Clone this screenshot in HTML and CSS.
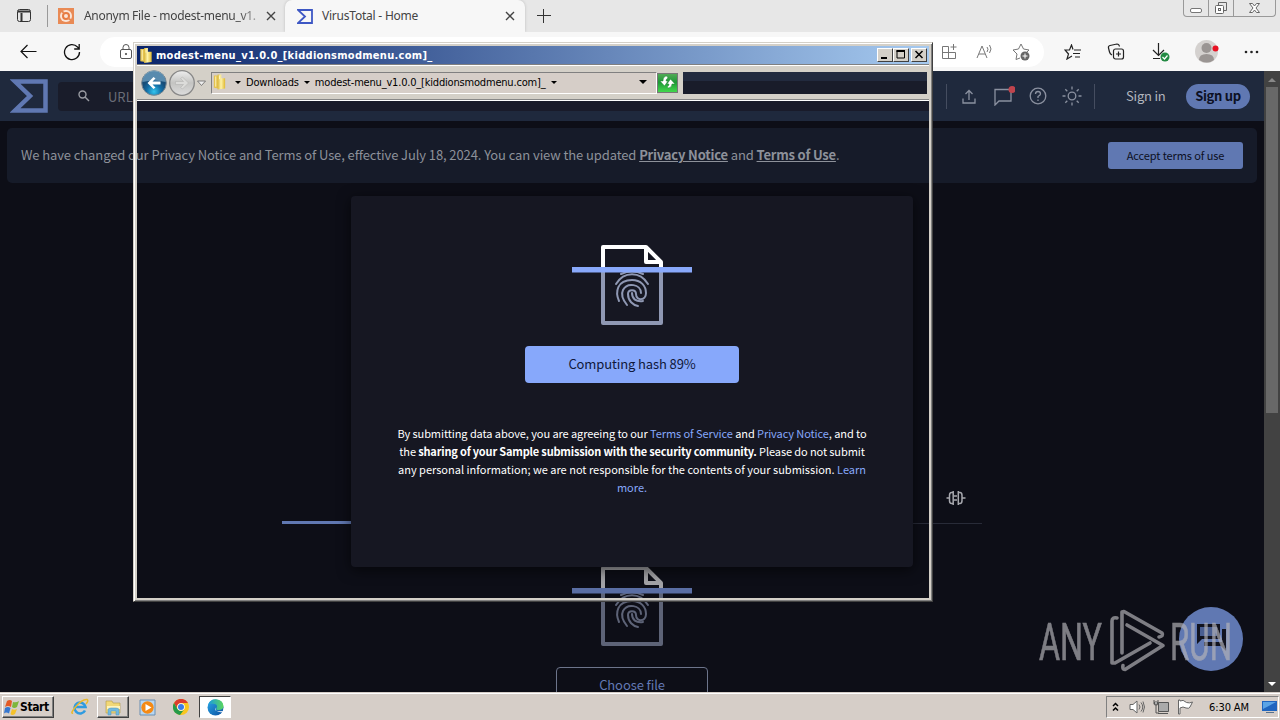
FILE: index.html
```
<!DOCTYPE html>
<html lang="en">
<head>
  <meta charset="UTF-8">
  <title>VirusTotal - Home</title>
  <link rel="stylesheet" href="styles.css">
</head>
<body>
  <!-- shared shapes -->
  <svg width="0" height="0" class="defs">
    <defs>
      <linearGradient id="gold" x2="1"><stop stop-color="#d9b63c"/><stop offset=".45" stop-color="#fff3a8"/><stop offset="1" stop-color="#e0b932"/></linearGradient>
      <radialGradient id="blueBtn" cy=".85"><stop stop-color="#35c5ee"/><stop offset=".6" stop-color="#126da5"/><stop offset="1" stop-color="#174d78"/></radialGradient>
      <linearGradient id="greyBtn" y2="1" x2="0"><stop stop-color="#eee"/><stop offset=".5" stop-color="#c4c4c2"/><stop offset="1" stop-color="#ddd"/></linearGradient>
      <linearGradient id="edgeA" x2="1" y2="1"><stop stop-color="#2aa7e8"/><stop offset="1" stop-color="#0b4fa0"/></linearGradient>
      <linearGradient id="edgeB" x2="1"><stop stop-color="#199be2"/><stop offset="1" stop-color="#5bd65c"/></linearGradient>
      <symbol id="folder" viewBox="0 0 16 18">
        <path d="M2 2h5v14l-5-1z" fill="#e5c34e"/><path d="M6 1h4v4h4v11l-8 1z" fill="url(#gold)"/><path d="M4 3v11M8 2v4" stroke="#fff6c0"/>
      </symbol>
      <symbol id="scanfile" viewBox="0 0 120 80">
        <g fill="none" stroke-width="4">
          <path d="M31 25V2h43l15 15v8M74 2v15h15" stroke="#fff" stroke-linejoin="round"/>
          <path d="M31 25v53h58V25" stroke="#8f98b3" stroke-linejoin="round"/>
        </g>
        <g fill="none" stroke="#8f98b3" stroke-width="2" stroke-linecap="round" transform="translate(0 -1)">
          <path d="M49 30q11-5 22 0"/>
          <path d="M44 40c8-13 24-13 32 0"/>
          <path d="M47 57c-4-9-2-21 13-21 9 0 14 6 14 13 0 8-10 8-10 1 0-5-8-5-8 0 0 7 5 11 10 12"/>
          <path d="M55 61c-4-5-6-11-4-15 4-8 18-6 18 3"/>
          <path d="M60 49c0 6 4 9 11 8"/>
        </g>
        <path d="M0 22h120v5.500H0z" fill="#89a9fb"/>
      </symbol>
    </defs>
  </svg>

  <div class="browser">
    <div class="tabstrip">
      <svg class="tab-actions" width="16" height="16" viewBox="0 0 16 16" fill="none" stroke="#333"><rect x="1.500" y="1.500" width="13" height="12" rx="2"/><path d="M2 3.500h12M5.500 5v8" stroke-width="2"/></svg>
      <div class="tab">
        <svg width="16" height="16" viewBox="0 0 16 16"><path fill="#e98a55" d="M0 0h16v16H0z"/><circle cx="8" cy="8" r="6" fill="#fbe5d8"/><circle cx="8" cy="8" r="3" fill="none" stroke="#e77b42" stroke-width="2"/><path d="M2 2l4 3M14 13l-4-3" stroke="#e98a55" stroke-width="2"/></svg>
        <span class="tab-title fade">Anonym File - modest-menu_v1.</span>
        <svg class="close" width="10" height="10" viewBox="0 0 10 10"><path d="M1 1l8 8M9 1L1 9" stroke="#444" stroke-width="1.400"/></svg>
      </div>
      <div class="tab active">
        <svg width="16" height="15" viewBox="0 0 16 15"><path d="M1 1h14v13H1l7-6.500z" fill="none" stroke="#3d57c4" stroke-width="1.800"/></svg>
        <span class="tab-title">VirusTotal - Home</span>
        <svg class="close" width="10" height="10" viewBox="0 0 10 10"><path d="M1 1l8 8M9 1L1 9" stroke="#444" stroke-width="1.400"/></svg>
      </div>
      <svg class="new-tab" width="14" height="14" viewBox="0 0 14 14"><path d="M0 6.500h14M6.500 0v14" stroke="#333"/></svg>
      <div class="caption-buttons">
        <span><svg width="24" height="16" fill="none" stroke="#777"><rect x="6.500" y="8.500" width="11" height="4" rx="1.500" fill="#fff"/></svg></span>
        <span><svg width="24" height="16" fill="none" stroke="#666"><path d="M9.500 5V2.500h8v8H15" /><rect x="6.500" y="5.500" width="8" height="8" rx="1" fill="#fff"/><rect x="9.500" y="8.500" width="2" height="2"/></svg></span>
        <span><svg width="41" height="16" fill="none" stroke="#666"><path d="M15.500 3.500h3l2 2.500 2-2.500h3l-3.500 4.500 3.500 4.500h-3l-2-2.500-2 2.500h-3l3.500-4.500z" fill="#fff"/></svg></span>
      </div>
    </div>

    <div class="toolbar">
      <svg class="back" width="17" height="15" viewBox="0 0 17 15" fill="none" stroke="#111" stroke-width="1.200"><path d="M16.500 7.500H1M7.500 1L1 7.500 7.500 14"/></svg>
      <svg class="reload" width="18" height="18" viewBox="0 0 18 18" fill="none" stroke="#111" stroke-width="1.300"><path d="M16.500 9A7.500 7.500 0 1 1 14.500 4L16 5.500M16.200 1v5h-5"/></svg>
      <div class="urlbar">
        <svg class="lock" width="13" height="16" viewBox="0 0 13 16" fill="none" stroke="#555"><rect x=".5" y="5.500" width="11" height="9" rx="1.500"/><path d="M3 5V3.500a3 3 0 0 1 6 0V5"/><circle cx="6" cy="10" r=".7" fill="#555"/></svg>
        <svg width="16" height="16" viewBox="0 0 16 16" fill="none" stroke="#777"><path d="M7.500 2.500h-6v12h13v-6h-13M7.500 2.500v12M12.500 0v6M9.500 3h6"/></svg>
        <svg width="17" height="16" viewBox="0 0 17 16" fill="none" stroke="#777"><path d="M1 14L6 2l5 12M3 10h6M11 3q2 2 0 5M13.500 1q3 4 0 8"/></svg>
        <svg width="18" height="18" viewBox="0 0 18 18" fill="none" stroke="#777"><path d="M8 15l-4 1.500 1-5.500L1 7l5.500-1L9 1l2.500 5L17 7l-2 2"/><circle cx="13" cy="13" r="4.500" fill="#666" stroke="none"/><path d="M13 10.500v5M10.500 13h5" stroke="#fff"/></svg>
      </div>
      <div class="tools">
        <svg width="18" height="16" viewBox="0 0 18 16" fill="none" stroke="#222" stroke-width="1.200"><path d="M9 5.500L7.500 1 5.500 6H1l3.500 4-1.500 5 5-3M10 6h7M9 9.500h7M11 13h5"/></svg>
        <svg width="18" height="17" viewBox="0 0 18 17" fill="none" stroke="#222" stroke-width="1.200"><rect x="6.500" y="6" width="10" height="10" rx="2"/><path d="M11.500 8.500v5M9 11h5M5 12q-2-1-2.500-3L1.500 5Q1 3 3 2.500l7-1.500q2 0 2.500 2.500"/></svg>
        <svg width="19" height="20" viewBox="0 0 19 20" fill="none" stroke="#222" stroke-width="1.200"><path d="M7.500 1v12M2 8l5.500 5.500L13 8M2 16.500h7"/><circle cx="14" cy="15" r="4.500" fill="#238a43" stroke="none"/><path d="M11.500 15l2 2 3-3.500" stroke="#fff"/></svg>
        <svg width="24" height="24" viewBox="0 0 24 24"><circle cx="11.500" cy="11.500" r="11.500" fill="#d4d1cf"/><circle cx="11.500" cy="8" r="5" fill="#9a9593"/><path d="M4 20q0-6 7.500-6T19 20q-7 5-15 0" fill="#9a9593"/><circle cx="20.500" cy="8.500" r="3" fill="#e81123"/></svg>
        <svg width="15" height="4" viewBox="0 0 15 4" fill="#222"><circle cx="2" cy="2" r="1.300"/><circle cx="7.500" cy="2" r="1.300"/><circle cx="13" cy="2" r="1.300"/></svg>
      </div>
    </div>

    <div class="viewport">
      <div class="page">
        <header class="vt-header">
          <svg class="vt-logo" width="38" height="34" viewBox="0 0 38 34"><path d="M5 2.500h30.500v29H5L20 17z" fill="none" stroke="#6078b2" stroke-width="4.500"/></svg>
          <div class="search">
            <svg width="12" height="12" viewBox="0 0 12 12" fill="none" stroke="#9a9ca3" stroke-width="1.400"><circle cx="4.500" cy="4.500" r="3.500"/><path d="M7 7l4 4"/></svg>
            <span>URL, IP address,</span>
          </div>
          <div class="header-icons">
            <i class="divider"></i>
            <svg width="14" height="15" viewBox="0 0 14 15"><path d="M7 11V2M3.500 5L7 1.500 10.500 5M1 9.500V14h12V9.500"/></svg>
            <svg class="nudge" width="21" height="20" viewBox="0 0 21 20"><path d="M1 19V3.500h16V15H5z"/><circle cx="18" cy="3.500" r="3.500" fill="#c0444d" stroke="none"/></svg>
            <svg width="18" height="18" viewBox="0 0 18 18"><circle cx="9" cy="9" r="7.800"/><path d="M6.500 7q0-2.500 2.500-2.500T11.500 7Q11.500 8 9 9.500v1.500M9 12.500V14"/></svg>
            <svg width="20" height="20" viewBox="0 0 20 20"><circle cx="10" cy="10" r="3.800"/><path d="M10 .5v3M10 16.500v3M.5 10h3M16.500 10h3M3.300 3.300l2 2M14.700 14.700l2 2M3.300 16.700l2-2M14.700 5.300l2-2"/></svg>
            <i class="divider last-divider"></i>
          </div>
          <span class="signin">Sign in</span>
          <span class="signup">Sign up</span>
        </header>

        <div class="notice">
          <p>We have changed our Privacy Notice and Terms of Use, effective July 18, 2024. You can view the updated <b>Privacy Notice</b> and <b>Terms of Use</b>.</p>
          <button><span>Accept terms of use</span></button>
        </div>

        <main class="home">
          <div class="home-tabs">
            <i class="marker"></i>
            <svg width="20" height="16" viewBox="0 0 20 16" fill="none" stroke="#a8a9af" stroke-width="1.500"><path d="M7.200 1v14M12.300 1v14M7 2.500H5.500q-2 0-2 3v5q0 3 2 3H7M12.500 2.500H14q2 0 2 3v5q0 3-2 3h-1.500M.5 8h3M16 8h3.500M8 6h3M8 10h3"/></svg>
          </div>
          <svg class="dim-icon" width="120" height="80"><use href="#scanfile"/></svg>
          <div class="choose"><span>Choose file</span></div>
        </main>

        <div class="modal">
          <svg width="120" height="80"><use href="#scanfile"/></svg>
          <div class="progress"><span>Computing hash 89%</span></div>
          <div class="terms">
            <span class="l1">By submitting data above, you are agreeing to our <a>Terms of Service</a> and <a>Privacy Notice</a>, and to</span>
            <span class="l2">the <b>sharing of your Sample submission with the security community.</b> Please do not submit</span>
            <span class="l3">any personal information; we are not responsible for the contents of your submission. <a>Learn</a></span>
            <span class="l4"><a>more.</a></span>
          </div>
        </div>

        <div class="chat">
          <svg width="32" height="28" viewBox="0 0 32 28"><path d="M1 0h23v15H6l-5 5zM26 5h4v22l-5-5H8v-4h18z" fill="#11131f"/><path d="M4 3h17v9H4z" fill="#4a5f92"/></svg>
        </div>
      </div>
      <div class="scrollbar">
        <svg width="16" height="15"><path d="M4 11l4-4 4 4z" fill="#888"/></svg>
        <i class="thumb"></i>
        <svg class="down" width="16" height="15"><path d="M4 5h8l-4 4z" fill="#fff"/></svg>
      </div>
    </div>
  </div>

  <!-- explorer window -->
  <div class="explorer">
    <div class="titlebar">
      <svg width="16" height="17"><use href="#folder"/></svg>
      <span class="title">modest-menu_v1.0.0_[kiddionsmodmenu.com]_</span>
      <span class="wbtn"><svg width="14" height="12"><path d="M3 8h6v2H3z"/></svg></span>
      <span class="wbtn"><svg width="14" height="12"><path d="M3 1.500h7.500v7.500H3z" fill="none" stroke="#000"/><path d="M2.500 1h8.500v2H2.500z"/></svg></span>
      <span class="wbtn last"><svg width="14" height="12"><path d="M3.500 2l7 7M10.500 2l-7 7" stroke="#000" stroke-width="1.500"/></svg></span>
    </div>
    <div class="navbar">
      <svg class="nav-arrows" width="69" height="28" viewBox="0 0 69 28">
        <circle cx="16" cy="14" r="12.300" fill="url(#blueBtn)" stroke="#788690"/>
        <path d="M4.500 13a11.500 11.500 0 0 1 23 0q-11-3-23 0" fill="#8fbfda" opacity=".55"/>
        <path d="M9.500 14l6-6 2 1.500-3 3h8v3h-8l3 3-2 1.500z" fill="#fff"/>
        <circle cx="44" cy="14" r="12.300" fill="url(#greyBtn)" stroke="#888" stroke-width="1.300"/>
        <path d="M50.500 14l-6-6-2 1.500 3 3h-8v3h8l-3 3 2 1.500z" fill="#dcdcda" stroke="#b4b4b2" stroke-width=".6"/>
        <path d="M59.500 12h8l-4 4.500z" fill="#eee" stroke="#666" stroke-width=".8"/>
      </svg>
      <div class="address">
        <svg width="15" height="18"><use href="#folder"/></svg>
        <i class="caret"></i>
        <span class="crumb c1">Downloads</span>
        <i class="caret"></i>
        <span class="crumb c2">modest-menu_v1.0.0_[kiddionsmodmenu.com]_</span>
        <i class="caret"></i>
        <i class="caret big"></i>
      </div>
      <div class="refresh"><svg width="21" height="19" viewBox="0 0 21 19"><path d="M10 3Q6 3 6 8H3l4.500 5L11 8H9q0-2 2-3zM11 15q4 0 4-4h3l-4.500-5L10 11h2q0 2-2 3z" fill="#fff" stroke="#18852c" stroke-width=".5"/></svg></div>
      <div class="searchbox"></div>
    </div>
    <div class="glass"></div>
  </div>

  <svg class="watermark" width="200" height="70" viewBox="0 0 200 70">
    <g fill="#b4b3b8" stroke="#b4b3b8" stroke-width=".7" font-family="Roboto, sans-serif" font-size="52">
      <text x="3" y="53" textLength="63" lengthAdjust="spacingAndGlyphs">ANY</text>
      <text x="134" y="53" textLength="62" lengthAdjust="spacingAndGlyphs">RUN</text>
    </g>
    <g fill="none" stroke="#b4b3b8" stroke-width="3.600" stroke-linejoin="round" stroke-linecap="round">
      <path d="M86 46V5l2-.5L126 26q2 3-3 4"/>
      <path d="M91 18l36 20.500-38 24q-3 0-2-4"/>
      <path d="M81 11q-5-1-5 3v42l3 0 35-20"/>
    </g>
  </svg>

  <div class="taskbar">
    <div class="start">
      <svg width="16" height="15" viewBox="0 0 16 15"><path d="M3 1q3-2 5 0L7 7Q4 5 1 7z" fill="#e35a25"/><path d="M9 2q3 1 6-1l-2 6q-3 2-5 0z" fill="#7db63b"/><path d="M1 8q3-2 5.500 0L5 13.500q-3-2-5 0z" fill="#3677cf"/><path d="M8 9q2 1.500 5 0l-2 5q-3 2-4.500 0z" fill="#f5c22b"/></svg>
      <span>Start</span>
    </div>
    <div class="task ie"><svg width="18" height="18" viewBox="0 0 18 18" fill="none"><path d="M14 12.500A5.500 5.500 0 1 1 14.500 9H5" stroke="#2f9be0" stroke-width="2.600"/><path d="M2 15Q-1 16 4 9.500 11 1 16 1.500q2 1-1 4.500" stroke="#e9b92d" stroke-width="1.500"/></svg></div>
    <div class="task raised"><svg width="18" height="18" viewBox="0 0 18 18"><path d="M2 3h6l1 2h7v10H2z" fill="#f2d877" stroke="#b49a45" stroke-width=".6"/><path d="M3 8h13v3H3z" fill="#fff4bd"/><path d="M4 17v-5q0-2 3-2h5q3 0 3 2v5h-3v-4H7v4z" fill="#72b9df" stroke="#4d94b8" stroke-width=".5"/></svg></div>
    <div class="task media"><svg width="17" height="17" viewBox="0 0 17 17"><path d="M1 1h15v15H1z" fill="#b8d7f2" stroke="#6a8fb2"/><circle cx="8.500" cy="8.500" r="6.200" fill="#f58a15"/><path d="M6.500 5l6 3.500-6 3.500z" fill="#fff"/></svg></div>
    <div class="task chrome"><svg width="16" height="16" viewBox="0 0 16 16"><circle cx="8" cy="8" r="8" fill="#f9c61f"/><path d="M1 4a8 8 0 0 1 14 0H8a4 4 0 0 0-3.500 6z" fill="#dc3c2f"/><path d="M1 4a8 8 0 0 0 6 12l4.500-6A4 4 0 0 1 4.500 10z" fill="#259a4a"/><circle cx="8" cy="8" r="3.800" fill="#fff"/><circle cx="8" cy="8" r="3" fill="#3b7de8"/></svg></div>
    <div class="task pressed"><svg width="17" height="17" viewBox="0 0 17 17"><circle cx="8.500" cy="8.500" r="8" fill="url(#edgeA)"/><path d="M1 6q2-6 8-5.700 7 .7 7.500 6.700 0 4-5 4-3 0-2-2 1.500-3-1.500-4Q4 4 1 6" fill="url(#edgeB)"/><path d="M8 8.500q-1 5 8 3.500l-.5 1Q9 14 8 8.500" fill="#fff"/></svg></div>
    <div class="tray">
      <svg width="10" height="12" viewBox="0 0 10 12" fill="none" stroke="#000" stroke-width="1.500"><path d="M1 5l2.500-2.500L6 5M1 9.500L3.500 7 6 9.500"/></svg>
      <svg width="17" height="14" viewBox="0 0 17 14" fill="none" stroke="#666"><path d="M1 4.500h3L8 1v12L4 9.500H1z" fill="#fff"/><path d="M10 4.500q2 2.500 0 5M12 2.500q3.500 4.500 0 9M14 1.500q3 5.500 0 11"/></svg>
      <svg width="17" height="16" viewBox="0 0 17 16" fill="none" stroke="#555"><path d="M5.500 3.500h10v9h-10z" fill="#aaa"/><path d="M5 14.500h10M1 1v4q0 1 2 1t2-1V1M3 6v8h3" stroke="#555"/><path d="M1.500 3h3v2h-3z" fill="#fff"/></svg>
      <svg width="17" height="16" viewBox="0 0 17 16" fill="#fff" stroke="#666"><path d="M1.500 1v14h1.500V9q3-2 6 0 3 1 4-1l2.500-5q-3 1.500-6 .500Q6 0 3 2V1z"/></svg>
      <span class="clock">6:30 AM</span>
      <svg class="desktop" width="15" height="14" viewBox="0 0 15 14"><path d="M0 1h15v10H0z" fill="#1f65bf"/><path d="M1 2h13L1 9z" fill="#5ba4e6"/><path d="M4 12h8v1H4z" fill="#56718e"/></svg>
    </div>
  </div>
</body>
</html>
```
FILE: styles.css
```
* {
  box-sizing: border-box;
}
body, html {
  margin: 0;
  width: 1280px;
  height: 720px;
  overflow: hidden;
}
body {
  display: flex;
  flex-direction: column;
  position: relative;
  font-family: "DejaVu Sans Condensed", "DejaVu Sans", sans-serif;
}
svg { flex: none; display: block; }
.defs { position: absolute; }
.browser {
  height: 692px;
  display: flex;
  flex-direction: column;
}

/* tabs */
.tabstrip {
  height: 32px;
  flex: none;
  display: flex;
  align-items: center;
  background: #e7e7e7;
  font: 12px/16px "Noto Sans", sans-serif;
  letter-spacing: -.22px;
  color: #444;
}
.tab-actions { margin-left: 16px; }
.tab {
  display: flex;
  align-items: center;
  height: 32px;
  width: 238px;
  margin-left: 15px;
  padding-left: 10px;
  border-left: 1px solid #aaa;
  border-image: linear-gradient(transparent 6px, #999 6px, #999 26px, transparent 26px) 1;
}
.tab-title {
  width: 175px;
  margin-left: 10px;
  white-space: nowrap;
}
.fade {
  letter-spacing: -.3px;
  -webkit-mask-image: linear-gradient(90deg, #000 88%, #0005);
}
.close { margin-left: 7px; }
.tab.active {
  width: 240px;
  margin-left: 0;
  padding-left: 12px;
  border: 0;
  background: #f7f7f7;
  border-radius: 7px 7px 0 0;
  box-shadow: 0 0 3px #bbb;
}
.active .tab-title { width: 174px; margin-left: 9px; }
.active .close { margin-left: 9px; }
.new-tab { margin-left: 12px; }
.caption-buttons {
  display: flex;
  align-self: flex-start;
  margin-left: auto;
  margin-right: 4px;
  height: 17px;
  border: 1px solid #999;
  border-top: 0;
  border-radius: 0 0 4px 4px;
}
.caption-buttons span + span { border-left: 1px solid #999; }

/* toolbar */
.toolbar {
  height: 39px;
  flex: none;
  display: flex;
  align-items: center;
  background: #f7f7f7;
}
.back { margin-left: 20px; }
.reload { margin-left: 26px; }
.urlbar {
  width: 944px;
  height: 30px;
  margin-left: 19px;
  padding-right: 14px;
  border-radius: 15px;
  background: #fff;
  display: flex;
  align-items: center;
  gap: 19px;
}
.lock { margin-left: 20px; margin-right: auto; }
.tools {
  flex: 1;
  display: flex;
  align-items: center;
  justify-content: space-between;
  padding: 0 21px 0 20px;
}

/* page */
.viewport {
  flex: 1;
  min-height: 0;
  display: flex;
}
.page {
  width: 1264px;
  position: relative;
  overflow: hidden;
  background: #0d0e17;
  font-family: "Noto Sans CJK SC", "Noto Sans", sans-serif;
}
.vt-header {
  height: 50px;
  display: flex;
  align-items: center;
  background: #1f293d;
  color: #b1b5bd;
  font-size: 14px;
}
.vt-logo { margin-left: 10px; }
.search {
  width: 760px;
  height: 29px;
  margin-left: 10px;
  padding-left: 20px;
  display: flex;
  align-items: center;
  gap: 18px;
  border-radius: 4px;
  background: #191c2a;
  color: #6a6d78;
  font-size: 13px;
}
.header-icons {
  width: 152px;
  margin-left: 128px;
  display: flex;
  align-items: center;
  gap: 15px;
  fill: none;
  stroke: #8b91a0;
  stroke-width: 1.3;
}
.nudge { margin-left: 3px; margin-right: -1px; }
.divider { width: 1px; height: 25px; flex: none; background: #454d60; }
.last-divider { margin-left: -3px; }
.signin { margin-left: 28px; width: 40px; white-space: nowrap; font-size: 13px; letter-spacing: -.2px; line-height: 18px; }
.signup {
  width: 64px;
  height: 25px;
  margin-left: 20px;
  border-radius: 13px;
  background: #6078b2;
  color: #0c1023;
  font-weight: bold;
  line-height: 24px;
  letter-spacing: -.3px;
  text-align: center;
  font-size: 13px;
}
.notice {
  height: 55px;
  margin: 7px 7px 0;
  padding: 0 14px;
  display: flex;
  align-items: center;
  justify-content: space-between;
  border-radius: 5px;
  background: #161b29;
  color: #8d919a;
  font-size: 13px;
}
.notice p { margin: 0 0 2px; white-space: nowrap; letter-spacing: -.1px; }
.notice b { text-decoration: underline; letter-spacing: -.19px; }
.notice button {
  width: 135px;
  height: 27px;
  padding: 0;
  border: 0;
  border-radius: 3px;
  background: #6078b2;
  color: #0c1023;
  font: 11px/27px "Noto Sans CJK SC", sans-serif;
  letter-spacing: -.1px;
}
.home {
  padding-top: 302px;
  display: flex;
  flex-direction: column;
  align-items: center;
}
.home-tabs {
  width: 700px;
  height: 39px;
  display: flex;
  align-items: flex-end;
  justify-content: space-between;
  border-bottom: 1px solid #282b38;
}
.home-tabs svg { margin: 0 16px 17px 0; }
.marker { width: 120px; height: 3px; margin-bottom: -1px; background: #6078b2; }
.dim-icon { margin-top: 42px; opacity: .62; }
.choose {
  width: 152px;
  height: 38px;
  margin-top: 21px;
  border: 1px solid #6c748b;
  border-radius: 4px;
  color: #6379b4;
  font-size: 13px;
  line-height: 34px;
  letter-spacing: -.1px;
  text-align: center;
}
.modal {
  position: absolute;
  left: 351px;
  top: 125px;
  width: 562px;
  height: 371px;
  padding-top: 49px;
  display: flex;
  flex-direction: column;
  align-items: center;
  border-radius: 4px;
  background: #161722;
  box-shadow: 0 3px 14px #0009;
}
.progress {
  width: 214px;
  height: 37px;
  margin-top: 21px;
  border-radius: 4px;
  background: #87a8fb;
  color: #10183a;
  font-size: 13px;
  line-height: 36px;
  letter-spacing: -.12px;
  text-align: center;
}
.terms {
  margin-top: 41px;
  display: flex;
  flex-direction: column;
  align-items: center;
  color: #fff;
  font-size: 11px;
  line-height: 18px;
  white-space: nowrap;
}
.l1 { letter-spacing: -.08px; }
.l2 { letter-spacing: -.1px; }
.l2 b { letter-spacing: -.19px; }
.terms a { color: #87a8fb; }
.chat {
  position: absolute;
  left: 1179px;
  top: 536px;
  width: 64px;
  height: 64px;
  padding: 17px 0 0 17px;
  border-radius: 50%;
  background: #6078b2;
}
.scrollbar {
  width: 16px;
  display: flex;
  flex-direction: column;
  align-items: center;
  background: #424242;
}
.thumb { width: 12px; height: 326px; margin-top: 1px; background: #686868; }
.down { margin-top: auto; }

/* explorer */
.explorer {
  position: absolute;
  left: 133px;
  top: 42px;
  width: 800px;
  height: 560px;
  border: 1px solid;
  border-color: #d4d0c8 #404040 #404040 #d4d0c8;
  box-shadow: inset 1px 1px #fff, inset -1px -1px #808080, inset 0 0 0 3px #d4d0c8;
  padding: 3px 3px 3px;
  display: flex;
  flex-direction: column;
}
.titlebar {
  height: 18px;
  flex: none;
  display: flex;
  align-items: center;
  padding: 0 2px 0 1px;
  background: linear-gradient(90deg, #0a246a, #a6caf0);
}
.title {
  flex: 1;
  margin-left: 2px;
  color: #fff;
  font-weight: bold;
  font-size: 11px;
  letter-spacing: .29px;
  white-space: nowrap;
}
.wbtn {
  width: 16px;
  height: 14px;
  background: #d4d0c8;
  border: 1px solid;
  border-color: #fff #404040 #404040 #fff;
}
.last { margin-left: 2px; }
.navbar {
  height: 37px;
  flex: none;
  display: flex;
  align-items: center;
  background: #d4d0c8;
  border-top: 1px solid #808080;
  border-bottom: 1px solid #fff;
  box-shadow: inset 0 1px #fff, inset 0 -1px #888;
}
.nav-arrows { margin-left: 1px; }
.address {
  width: 446px;
  height: 22px;
  margin-left: 4px;
  display: flex;
  align-items: center;
  padding-bottom: 1px;
  border: 1px solid;
  border-color: #808080 #fff #fff #808080;
  background: #d6cec8;
  font-size: 11px;
}
.caret {
  border: 3px solid transparent;
  border-top-color: #000;
  border-bottom: 0;
  margin: 0 5px;
}
.address svg + .caret { margin-left: 8px; }
.crumb { white-space: nowrap; }
.c1 { letter-spacing: -.17px; }
.c2 { letter-spacing: -.19px; }
.c2 + .caret { margin-left: 6px; }
.big { margin-left: auto; margin-right: 9px; border-width: 4px 4px 0; }
.refresh {
  width: 21px;
  height: 20px;
  border: 1px solid #777;
  background: linear-gradient(#51aa56, #1e9836 45%, #42d84c);
  display: flex;
  align-items: center;
  justify-content: center;
}
.searchbox {
  flex: 1;
  height: 22px;
  margin: 0 2px 0 5px;
  background: linear-gradient(#222a3e 9px, #191c2a 9px);
}
.glass { flex: 1; background: linear-gradient(#191b2a 10px, transparent 10px); }

.watermark {
  position: absolute;
  left: 1036px;
  top: 607px;
  opacity: .68;
}

/* taskbar */
.taskbar {
  height: 28px;
  position: relative;
  display: flex;
  align-items: center;
  padding: 1px 1px 0 2px;
  background: #d6cec8;
  border-top: 1px solid #d6cec8;
  box-shadow: inset 0 1px #fff;
}
.start {
  width: 52px;
  height: 22px;
  display: flex;
  align-items: center;
  padding-left: 1px;
  border: 1px solid;
  border-color: #fff #404040 #404040 #fff;
  box-shadow: inset -1px -1px #808080;
  font-size: 12px;
  font-weight: bold;
  letter-spacing: -.4px;
}
.task {
  width: 32px;
  height: 22px;
  display: flex;
  align-items: center;
  justify-content: center;
}
.ie { margin-left: 10px; }
.raised {
  margin-left: 1px;
  border: 1px solid;
  border-color: #fff #404040 #404040 #fff;
  box-shadow: inset -1px -1px #808080;
}
.media { margin-left: 2px; }
.chrome { margin-left: 2px; }
.pressed {
  margin-left: 2px;
  background: #fff;
  border: 1px solid;
  border-color: #404040 #fff #fff #404040;
}
.tray {
  width: 173px;
  height: 22px;
  margin-left: auto;
  padding-left: 5px;
  display: flex;
  align-items: center;
  border: 1px solid;
  border-color: #808080 #fff #fff #808080;
  font-size: 11px;
  gap: 7px;
}
.clock { margin-left: 8px; white-space: nowrap; letter-spacing: -.1px; }
.desktop { margin-left: auto; margin-right: 1px; }
```
